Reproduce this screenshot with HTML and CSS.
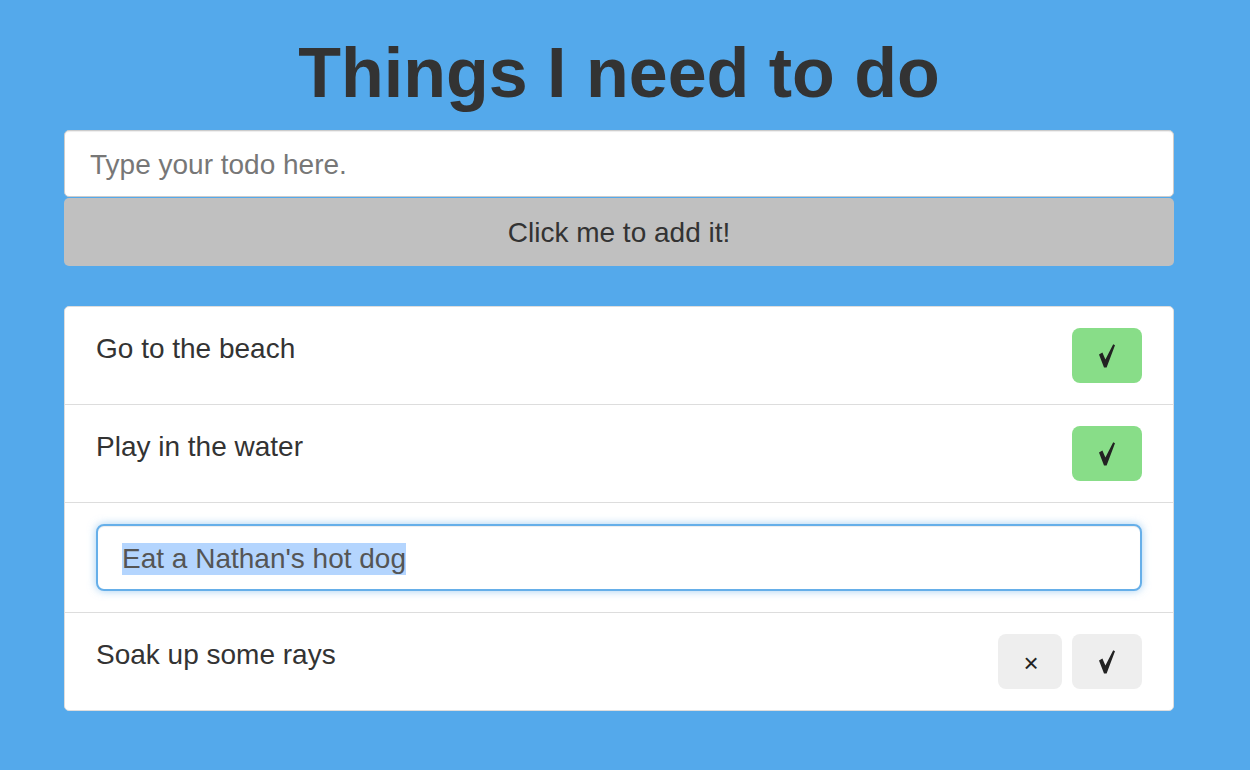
FILE: index.html
```html
<!DOCTYPE html>
<html lang="en">
<head>
<meta charset="utf-8">
<title>Things I need to do</title>
<link rel="stylesheet" href="styles.css">
</head>
<body>
<div class="container">
  <h1 class="title">Things I need to do</h1>
  <form class="add-form">
    <input class="add-input" type="text" placeholder="Type your todo here.">
    <button class="add-button" type="button">Click me to add it!</button>
  </form>
  <ul class="todo-list">
    <li class="todo-item">
      <span class="todo-text">Go to the beach</span>
      <div class="actions">
        <button class="btn btn-done" type="button"><svg class="check" viewBox="0 0 16 24" width="16" height="24"><path d="M0 10.5 L3.4 8.4 L6.4 15.4 L14.2 0.2 L16 1.2 L7.6 23.5 L5 23.5 Z"/></svg></button>
      </div>
    </li>
    <li class="todo-item">
      <span class="todo-text">Play in the water</span>
      <div class="actions">
        <button class="btn btn-done" type="button"><svg class="check" viewBox="0 0 16 24" width="16" height="24"><path d="M0 10.5 L3.4 8.4 L6.4 15.4 L14.2 0.2 L16 1.2 L7.6 23.5 L5 23.5 Z"/></svg></button>
      </div>
    </li>
    <li class="todo-item editing">
      <div class="edit-field"><span class="selected">Eat a Nathan's hot dog</span></div>
    </li>
    <li class="todo-item">
      <span class="todo-text">Soak up some rays</span>
      <div class="actions">
        <button class="btn btn-plain btn-remove" type="button">×</button>
        <button class="btn btn-plain" type="button"><svg class="check" viewBox="0 0 16 24" width="16" height="24"><path d="M0 10.5 L3.4 8.4 L6.4 15.4 L14.2 0.2 L16 1.2 L7.6 23.5 L5 23.5 Z"/></svg></button>
      </div>
    </li>
  </ul>
</div>
</body>
</html>
```

FILE: styles.css
```css
* {
  box-sizing: border-box;
}

html, body {
  margin: 0;
  height: 100%;
}

body {
  background: #54a9eb;
  font-family: "Liberation Sans", Arial, sans-serif;
  color: #333;
}

.container {
  width: 1110px;
  margin-left: 64px;
  padding-top: 35px;
}

.title {
  margin: 0 0 18px;
  font-size: 70px;
  line-height: 77px;
  font-weight: bold;
  text-align: center;
  color: #333;
}

.add-form {
  margin: 0;
}

.add-input {
  display: block;
  width: 100%;
  height: 67px;
  margin: 0;
  padding: 2px 25px 0;
  border: 1px solid #cccccc;
  border-radius: 5px;
  background: #fff;
  box-shadow: inset 0 1px 1px rgba(0, 0, 0, 0.075);
  font-family: "Liberation Sans", Arial, sans-serif;
  font-size: 28px;
  color: #333;
  outline: none;
}

.add-input::placeholder {
  color: #777;
}

.add-button {
  display: block;
  width: 100%;
  height: 68px;
  margin: 1px 0 0;
  padding: 2px 0 0;
  border: none;
  border-radius: 5px;
  background: #c0c0c0;
  font-family: "Liberation Sans", Arial, sans-serif;
  font-size: 28px;
  color: #333;
}

.todo-list {
  list-style: none;
  margin: 40px 0 0;
  padding: 0;
  background: #fff;
  border: 1px solid #dddddd;
  border-radius: 5px;
}

.todo-item {
  display: flex;
  justify-content: space-between;
  align-items: flex-start;
  padding: 21px 31px;
  font-size: 28px;
  line-height: 40px;
  color: #333;
}

.todo-item + .todo-item {
  border-top: 1px solid #dddddd;
}

.todo-text {
  padding-top: 1px;
}

.actions {
  display: flex;
  gap: 10px;
}

.btn {
  display: flex;
  align-items: center;
  justify-content: center;
  width: 70px;
  height: 55px;
  padding: 0;
  border: none;
  border-radius: 8px;
  font-family: "Liberation Sans", Arial, sans-serif;
  color: #222;
}

.btn-done {
  background: #88dd88;
}

.btn-plain {
  background: #eeeeee;
}

.btn-remove {
  width: 64px;
  font-size: 26px;
  line-height: 1;
  padding: 2px 0 0 2px;
}

.check {
  display: block;
  fill: #222;
}

.edit-field {
  width: 100%;
  height: 67px;
  display: flex;
  align-items: center;
  padding: 2px 24px 0;
  border: 2px solid #66afe9;
  border-radius: 8px;
  background: #fff;
  box-shadow: inset 0 1px 1px rgba(0, 0, 0, 0.075), 0 0 8px rgba(102, 175, 233, 0.6);
  font-size: 28px;
  line-height: 32px;
  color: #555;
}

.selected {
  background: #b4d5fe;
}
```
